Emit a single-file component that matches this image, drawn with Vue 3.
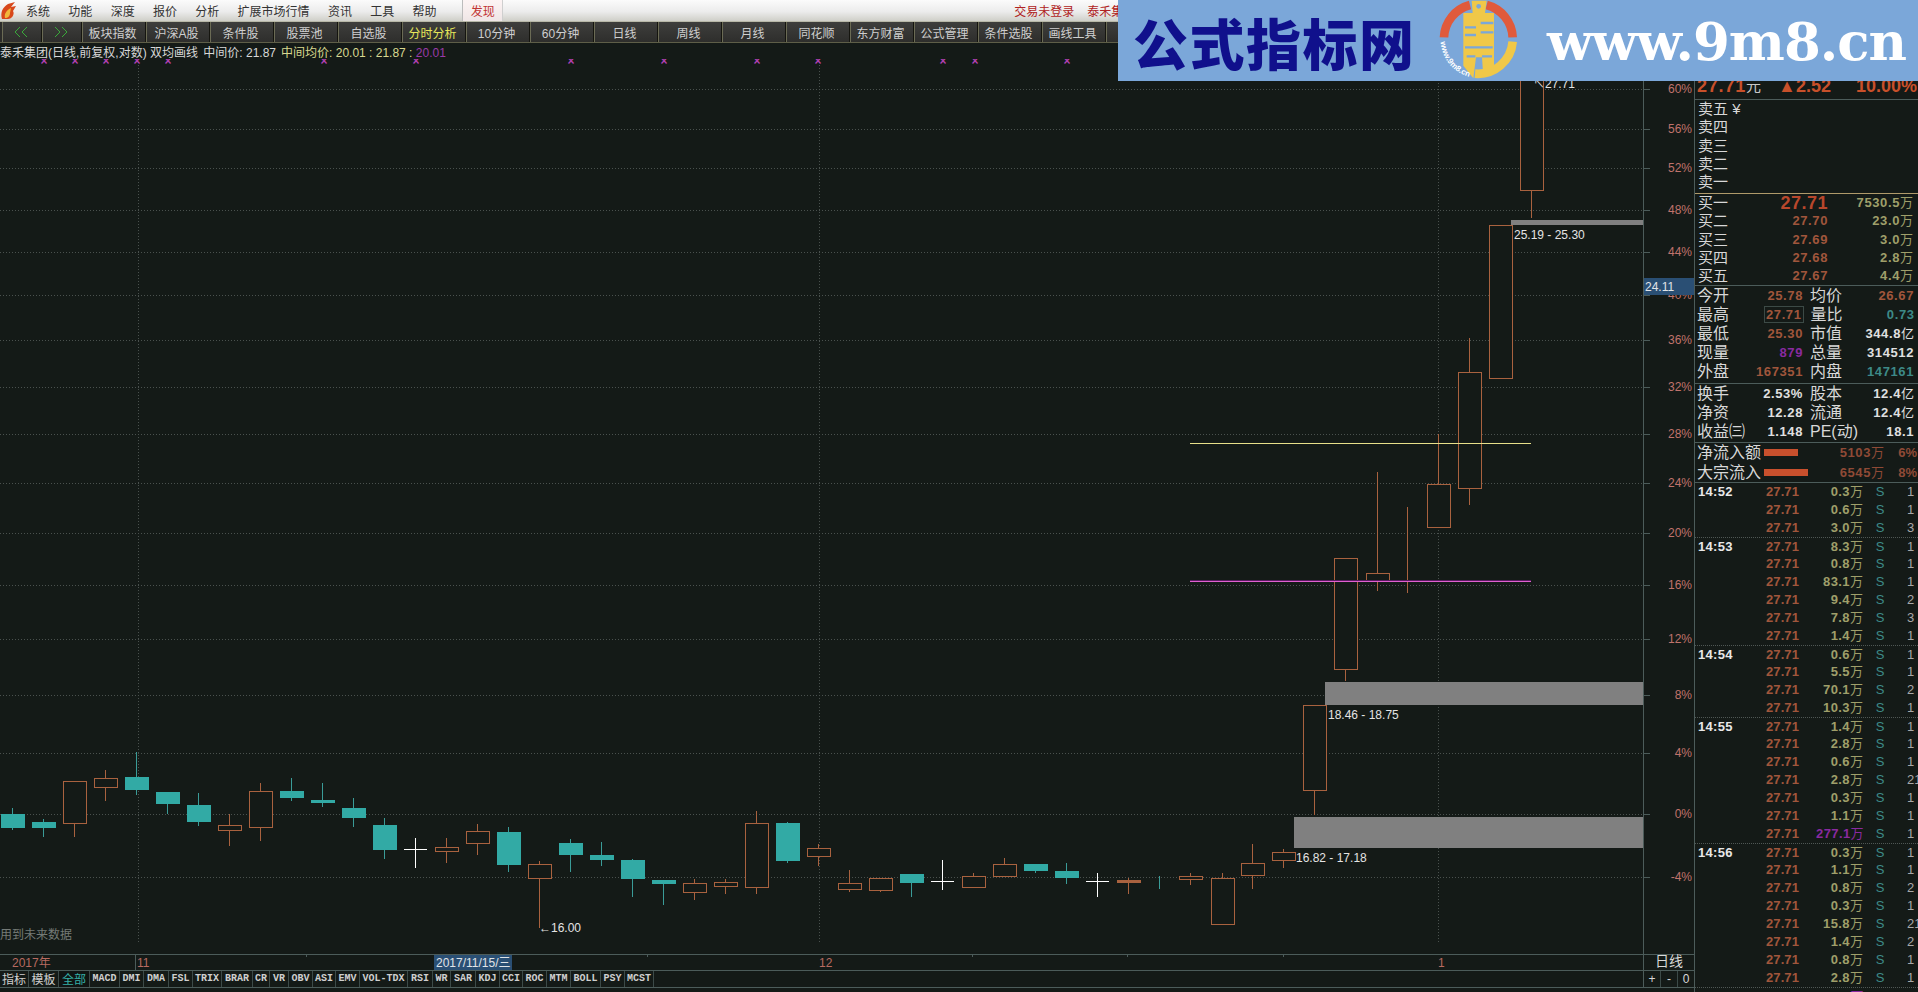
<template>
  <div class="terminal">
    <div class="menubar">
      <svg class="app-icon" width="18" height="20" viewBox="0 0 18 20">
        <path d="M2 18 C0 11 3 6 8 3 L15 1 L11 6 L16 5 L13 10 C15 13 12 18 8 18 Z" fill="#d8481c" />
        <path d="M5 17 C4 12 7 9 11 7 L10 12 C10 15 8 17 5 17 Z" fill="#f2b83c" />
      </svg>
      <span v-for="m in menus" :key="m" class="menu-item">{{ m }}</span>
      <span class="discover">发现</span>
      <div class="account">
        <span>交易未登录</span>
        <span>泰禾集团</span>
      </div>
    </div>

    <div class="toolbar">
      <div class="tool-btn nav">
        <svg width="14" height="12" viewBox="0 0 14 12"><path d="M6 1 L1 6 L6 11 M13 1 L8 6 L13 11" /></svg>
      </div>
      <div class="tool-btn nav">
        <svg width="14" height="12" viewBox="0 0 14 12"><path d="M1 1 L6 6 L1 11 M8 1 L13 6 L8 11" /></svg>
      </div>
      <div
        v-for="t in tools"
        :key="t"
        class="tool-btn"
        :class="{ active: t === '分时分析' }"
      >{{ t }}</div>
    </div>

    <div class="main">
      <div class="chart-col">
        <div class="info">
          <span>泰禾集团(日线,前复权,对数) 双均画线 </span>
          <span class="info-price">中间价: 21.87</span>
          <span class="info-yellow">中间均价: 20.01 : 21.87 : </span>
          <span class="info-purple">20.01</span>
        </div>

        <svg class="chart" width="1694" height="911" viewBox="0 59 1694 911" shape-rendering="crispEdges">
          <!-- grid -->
          <g v-for="g in grid" :key="g.label">
            <line x1="0" x2="1643" :y1="g.y + 0.5" :y2="g.y + 0.5" class="dots" />
            <line x1="1644" x2="1650" :y1="g.y + 0.5" :y2="g.y + 0.5" class="axis-line" />
            <text x="1692" :y="g.y + 4" text-anchor="end" class="axis-label">{{ g.label }}</text>
          </g>
          <line v-for="x in vLines" :key="x" :x1="x + 0.5" :x2="x + 0.5" y1="62" y2="943" class="dots" />
          <line x1="1643.5" x2="1643.5" y1="59" y2="970" class="axis-line" />

          <!-- zones -->
          <rect x="1294" y="817" width="349" height="31" class="zone" />
          <rect x="1325" y="682" width="318" height="23" class="zone" />
          <rect x="1511" y="220" width="132" height="5" class="zone" />

          <!-- candles -->
          <g v-for="c in candles" :key="c.x">
            <line :x1="c.x + 0.5" :x2="c.x + 0.5" :y1="c.hi" :y2="c.lo" :stroke="c.wick" />
            <line
              v-if="c.kind === 'x'"
              :x1="c.x - 11"
              :x2="c.x + 12"
              :y1="c.top + 0.5"
              :y2="c.top + 0.5"
              stroke="#fff"
            />
            <rect
              v-else
              :x="c.x - 11 + 0.5"
              :y="c.top + 0.5"
              width="23"
              :height="c.bot - c.top"
              :fill="c.fill"
              :stroke="c.stroke"
            />
          </g>

          <!-- drawn lines -->
          <line x1="1190" x2="1531" y1="443.5" y2="443.5" stroke="#e8e08a" />
          <line x1="1190" x2="1531" y1="580.5" y2="580.5" stroke="#5a1a60" />
          <line x1="1190" x2="1531" y1="581.5" y2="581.5" stroke="#e060d0" />

          <!-- x marks -->
          <text v-for="x in marks" :key="x" :x="x" y="65" text-anchor="middle" class="mark">×</text>

          <!-- price notes -->
          <g class="note">
            <text x="1296" y="862">16.82 - 17.18</text>
            <text x="1328" y="719">18.46 - 18.75</text>
            <text x="1514" y="239">25.19 - 25.30</text>
            <text x="539" y="932">←16.00</text>
            <text x="1533" y="88">↖27.71</text>
          </g>
          <text x="0" y="939" class="future">用到未来数据</text>

          <!-- date axis -->
          <line x1="0" x2="1694" y1="954.5" y2="954.5" class="axis-line" />
          <line v-for="x in dateTicks" :key="x" :x1="x + 0.5" :x2="x + 0.5" y1="955" y2="957" class="axis-line" />
          <line x1="135.5" x2="135.5" y1="955" y2="970" class="axis-line" />
          <text x="12" y="967" class="date-label">2017年</text>
          <text x="137" y="967" class="date-label">11</text>
          <text x="819" y="967" class="date-label">12</text>
          <text x="1438" y="967" class="date-label">1</text>
          <rect x="434" y="955" width="78" height="15" fill="#2a4f74" />
          <text x="436" y="967" class="date-current">2017/11/15/三</text>
          <text x="1669" y="966" text-anchor="middle" class="period">日线</text>

          <!-- cursor price -->
          <rect x="1644" y="278" width="50" height="17" fill="#2a4f74" />
          <text x="1645" y="291" class="date-current">24.11</text>
        </svg>

        <div class="tabs">
          <span
            v-for="t in tabs"
            :key="t.name"
            class="tab"
            :class="{ cjk: t.cjk, current: t.name === '全部' }"
            :style="{ width: t.w + 'px' }"
          >{{ t.name }}</span>
          <div class="zoom-btns">
            <span>+</span>
            <span>-</span>
            <span>0</span>
          </div>
        </div>
      </div>

      <div class="panel">
        <div class="quote">
          <span class="q-price">27.71</span><span class="q-unit">元</span>
          <span class="q-change">▲2.52</span>
          <span class="q-pct">10.00%</span>
        </div>

        <div class="sell">
          <div v-for="(s, i) in sells" :key="s" class="book-row">{{ s }}<span v-if="i === 0">&nbsp;¥</span></div>
        </div>

        <div class="buy">
          <div v-for="(b, i) in buys" :key="b.name" class="book-row">
            <span class="b-name">{{ b.name }}</span>
            <span class="b-price" :class="{ big: i === 0 }">{{ b.price }}</span>
            <span class="b-vol">{{ b.vol }}<i>万</i></span>
          </div>
        </div>

        <div class="stats first">
          <div v-for="r in statsA" :key="r[0]" class="stat-row">
            <span class="s-label">{{ r[0] }}</span>
            <span class="s-value" :class="[r[2], { boxed: r[1] === '27.71' }]">{{ r[1] }}</span>
            <span class="s-label second">{{ r[3] }}</span>
            <span class="s-value wide" :class="r[5]">{{ num(r[4]) }}<i>{{ unit(r[4]) }}</i></span>
          </div>
        </div>

        <div class="stats second-block">
          <div v-for="r in statsB" :key="r[0]" class="stat-row">
            <span class="s-label">{{ r[0] }}</span>
            <span class="s-value white">{{ r[1] }}</span>
            <span class="s-label second">{{ r[2] }}</span>
            <span class="s-value wide white">{{ num(r[3]) }}<i>{{ unit(r[3]) }}</i></span>
          </div>
        </div>

        <div class="flows">
          <div v-for="f in flows" :key="f.name" class="flow-row">
            <span class="f-name">{{ f.name }}</span>
            <span class="f-bar-wrap"><span class="f-bar" :style="{ width: f.bar + 'px' }"></span></span>
            <span class="f-val">{{ f.val }}<i>万</i></span>
            <span class="f-pct">{{ f.pct }}</span>
          </div>
        </div>

        <div class="trades">
          <div v-for="(t, i) in trades" :key="i" class="trade" :class="{ head: t.time }">
            <span class="t-time">{{ t.time }}</span>
            <span class="t-price">27.71</span>
            <span class="t-vol" :class="{ huge: t.vol === '277.1' || t.vol === '143.3' }">{{ t.vol }}<i>万</i></span>
            <span class="t-side">S</span>
            <span class="t-count">{{ t.n }}</span>
          </div>
        </div>
      </div>
    </div>

    <div class="banner">
      <span class="banner-title">公式指标网</span>
      <svg class="banner-logo" width="130" height="84" viewBox="0 0 390 252">
        <path d="M72 115 A105 105 0 0 1 150 18" class="arc red" />
        <path d="M200 18 A105 105 0 0 1 278 115" class="arc red" />
        <path d="M278 128 A105 105 0 0 1 165 224" class="arc gold" />
        <path
          d="M155 5 H200 L195 42 H222 V172 L222 215 L190 235 L186 175 H168 L160 238 L130 200 V42 H158 Z"
          fill="#f0c848"
        />
        <circle cx="176" cy="22" r="7" fill="#7ba7d9" />
        <path d="M135 85 H168 M135 108 H168 M182 72 H220 M182 100 H220 M135 145 H218 M140 172 H166 M186 172 H216" class="slot" />
        <defs>
          <path id="ringText" d="M62 128 A116 116 0 0 0 160 236" />
        </defs>
        <text class="ring-text"><textPath href="#ringText">www.9m8.cn</textPath></text>
      </svg>
      <span class="banner-site">www.9m8.cn</span>
    </div>
  </div>
</template>

<script setup>
const menus = ['系统', '功能', '深度', '报价', '分析', '扩展市场行情', '资讯', '工具', '帮助']

const tools = [
  '板块指数', '沪深A股', '条件股', '股票池', '自选股', '分时分析', '10分钟', '60分钟', '日线',
  '周线', '月线', '同花顺', '东方财富', '公式管理', '条件选股', '画线工具', '论坛'
]

const grid = [
  ['60%', 89], ['56%', 129], ['52%', 168], ['48%', 210], ['44%', 252], ['40%', 295],
  ['36%', 340], ['32%', 387], ['28%', 434], ['24%', 483], ['20%', 533], ['16%', 585],
  ['12%', 639], ['8%', 695], ['4%', 753], ['0%', 814], ['-4%', 877]
].map(([label, y]) => ({ label, y }))

const vLines = [138, 819, 1438]
const marks = [44, 75, 106, 137, 168, 324, 416, 571, 664, 757, 818, 943, 975, 1067]
const dateTicks = [306, 647, 972, 1127, 1283]

const BG = '#141a17'
const UP = '#a9623f'
const DOWN = '#32aaa5'

// x, high, low, body top, body bottom, kind (r hollow red, g solid green, f solid red, x doji)
const candles = [
  [12, 808, 830, 814, 827, 'g'], [43, 819, 837, 822, 827, 'g'], [74, 781, 837, 781, 823, 'r'],
  [105, 770, 801, 778, 787, 'r'], [136, 752, 795, 777, 789, 'g'], [167, 792, 814, 792, 803, 'g'],
  [198, 793, 826, 805, 821, 'g'], [229, 814, 846, 825, 830, 'r'], [260, 783, 841, 791, 827, 'r'],
  [291, 778, 801, 791, 797, 'g'], [322, 783, 807, 800, 802, 'g'], [353, 798, 827, 808, 817, 'g'],
  [384, 818, 859, 825, 849, 'g'], [415, 838, 868, 849, 849, 'x'], [446, 838, 863, 847, 851, 'r'],
  [477, 824, 855, 831, 843, 'r'], [508, 827, 872, 832, 864, 'g'], [539, 861, 928, 864, 878, 'r'],
  [570, 839, 872, 843, 854, 'g'], [601, 842, 866, 855, 859, 'g'], [632, 859, 897, 860, 878, 'g'],
  [663, 880, 905, 880, 883, 'g'], [694, 879, 900, 883, 892, 'r'], [725, 879, 894, 882, 886, 'r'],
  [756, 811, 894, 823, 887, 'r'], [787, 822, 863, 823, 860, 'g'], [818, 844, 866, 848, 856, 'r'],
  [849, 870, 892, 883, 889, 'r'], [880, 878, 892, 878, 890, 'r'], [911, 874, 897, 874, 882, 'g'],
  [942, 860, 890, 881, 881, 'x'], [973, 873, 888, 876, 887, 'r'], [1004, 858, 876, 864, 876, 'r'],
  [1035, 864, 873, 864, 870, 'g'], [1066, 863, 884, 871, 877, 'g'], [1097, 873, 897, 881, 881, 'x'],
  [1128, 878, 894, 880, 882, 'f'], [1159, 876, 889, 879, 879, 'g'], [1190, 873, 885, 876, 879, 'r'],
  [1222, 873, 924, 878, 924, 'r'], [1252, 844, 889, 863, 875, 'r'], [1283, 849, 868, 852, 860, 'r'],
  [1314, 705, 815, 705, 790, 'r'], [1345, 558, 681, 558, 669, 'r'], [1377, 472, 591, 573, 581, 'r'],
  [1407, 507, 593, 581, 581, 'f'], [1438, 434, 527, 484, 527, 'r'], [1469, 338, 505, 372, 488, 'r'],
  [1500, 225, 378, 225, 378, 'r'], [1531, 60, 218, 60, 190, 'r']
].map(([x, hi, lo, top, bot, kind]) => ({
  x, hi, lo, top, bot, kind,
  wick: kind === 'x' ? '#fff' : kind === 'g' ? '#3a9c98' : UP,
  fill: kind === 'g' ? DOWN : kind === 'f' ? UP : BG,
  stroke: kind === 'g' ? DOWN : UP
}))

const tabs = [
  { name: '指标', w: 29, cjk: true }, { name: '模板', w: 30, cjk: true }, { name: '全部', w: 31, cjk: true },
  { name: 'MACD', w: 30 }, { name: 'DMI', w: 24 }, { name: 'DMA', w: 25 }, { name: 'FSL', w: 24 },
  { name: 'TRIX', w: 29 }, { name: 'BRAR', w: 31 }, { name: 'CR', w: 17 }, { name: 'VR', w: 19 },
  { name: 'OBV', w: 24 }, { name: 'ASI', w: 23 }, { name: 'EMV', w: 24 }, { name: 'VOL-TDX', w: 48 },
  { name: 'RSI', w: 25 }, { name: 'WR', w: 18 }, { name: 'SAR', w: 25 }, { name: 'KDJ', w: 24 },
  { name: 'CCI', w: 23 }, { name: 'ROC', w: 24 }, { name: 'MTM', w: 24 }, { name: 'BOLL', w: 30 },
  { name: 'PSY', w: 24 }, { name: 'MCST', w: 29 }
]

const sells = ['卖五', '卖四', '卖三', '卖二', '卖一']

const buys = [
  { name: '买一', price: '27.71', vol: '7530.5' },
  { name: '买二', price: '27.70', vol: '23.0' },
  { name: '买三', price: '27.69', vol: '3.0' },
  { name: '买四', price: '27.68', vol: '2.8' },
  { name: '买五', price: '27.67', vol: '4.4' }
]

const statsA = [
  ['今开', '25.78', 'red', '均价', '26.67', 'red'],
  ['最高', '27.71', 'red', '量比', '0.73', 'teal'],
  ['最低', '25.30', 'red', '市值', '344.8亿', 'white'],
  ['现量', '879', 'purple', '总量', '314512', 'white'],
  ['外盘', '167351', 'red', '内盘', '147161', 'teal']
]

const statsB = [
  ['换手', '2.53%', '股本', '12.4亿'],
  ['净资', '12.28', '流通', '12.4亿'],
  ['收益㈢', '1.148', 'PE(动)', '18.1']
]

// the 亿 suffix is drawn in the regular weight
const num = (v) => v.replace('亿', '')
const unit = (v) => (v.endsWith('亿') ? '亿' : '')

const flows = [
  { name: '净流入额', bar: 34, val: '5103', pct: '6%' },
  { name: '大宗流入', bar: 44, val: '6545', pct: '8%' }
]

const rows = [
  ['14:52', '0.3', 1], ['', '0.6', 1], ['', '3.0', 3],
  ['14:53', '8.3', 1], ['', '0.8', 1], ['', '83.1', 1], ['', '9.4', 2], ['', '7.8', 3], ['', '1.4', 1],
  ['14:54', '0.6', 1], ['', '5.5', 1], ['', '70.1', 2], ['', '10.3', 1],
  ['14:55', '1.4', 1], ['', '2.8', 1], ['', '0.6', 1], ['', '2.8', 21], ['', '0.3', 1], ['', '1.1', 1], ['', '277.1', 1],
  ['14:56', '0.3', 1], ['', '1.1', 1], ['', '0.8', 2], ['', '0.3', 1], ['', '15.8', 21], ['', '1.4', 2], ['', '0.8', 1], ['', '2.8', 1],
  ['14:57', '143.3', 1]
]
const trades = rows.map(([time, vol, n]) => ({ time, vol, n }))
</script>

<style>
html, body {
  margin: 0;
  background: #141a17;
  overflow: hidden;
}
</style>

<style scoped>
.terminal {
  position: relative;
  width: 1918px;
  height: 992px;
  overflow: hidden;
  display: flex;
  flex-direction: column;
  background: #141a17;
  color: #d8d8d8;
  font-family: "Liberation Sans", "Noto Sans CJK SC", sans-serif;
  font-size: 12px;
}

.menubar {
  height: 22px;
  flex: none;
  display: flex;
  align-items: center;
  gap: 18.3px;
  padding-left: 26px;
  box-sizing: border-box;
  position: relative;
  background: linear-gradient(#fbfbfb, #ececec 55%, #cfcfc8);
  border-bottom: 1px solid #b8b8a8;
  color: #333;
}

.app-icon {
  position: absolute;
  left: 0;
  top: 1px;
}

.discover {
  height: 100%;
  padding: 0 7px 0 8px;
  margin-left: 7px;
  display: flex;
  align-items: center;
  color: #c23434;
  background: linear-gradient(#fdf4f4, #efe6e6);
  border-left: 1px solid #bcbcbc;
  border-right: 1px solid #cfcfcf;
}

.account {
  display: flex;
  gap: 13px;
  margin-left: 493px;
  color: #b02222;
}

.toolbar {
  height: 21px;
  flex: none;
  display: flex;
  padding-left: 2px;
  background: #2c2c2a;
  border-bottom: 1px solid #5e5e48;
  box-sizing: border-box;
  overflow: hidden;
}

.tool-btn {
  width: 64px;
  flex: none;
  box-sizing: border-box;
  padding-right: 3px;
  display: flex;
  align-items: center;
  justify-content: center;
  color: #cfcfcf;
  background: linear-gradient(#3e3e3c, #2e2e2c);
  border-right: 1px solid #15150f;
  border-left: 1px solid #6b6b55;
}

.tool-btn.nav {
  width: 40px;
}

.tool-btn.nav svg {
  fill: none;
  stroke: #3aaa3a;
  stroke-width: 1;
}

.tool-btn.active {
  color: #e6e65a;
}

.main {
  flex: 1;
  min-height: 0;
  display: flex;
}

.chart-col {
  width: 1694px;
  flex: none;
  display: flex;
  flex-direction: column;
}

.info {
  height: 16px;
  line-height: 20px;
  flex: none;
  white-space: pre;
  color: #d8d8d8;
}

.info-price {
  margin-left: 2px;
  margin-right: 5px;
}

.info-yellow {
  color: #d8d890;
}

.info-purple {
  color: #9a3aa8;
}

.chart {
  display: block;
  flex: none;
  font-family: "Liberation Sans", "Noto Sans CJK SC", sans-serif;
  font-size: 12px;
}

.chart text {
  shape-rendering: auto;
}

.dots {
  stroke: #4a514e;
  stroke-dasharray: 1 2;
}

.axis-line {
  stroke: #4c5c5a;
}

.axis-label {
  fill: #c0736c;
}

.zone {
  fill: #808080;
}

.mark {
  fill: #b040b0;
  font-size: 12px;
  font-weight: 700;
}

.note text {
  fill: #e4e4e4;
}

.future {
  fill: #747a76;
}

.date-label {
  fill: #b86a60;
}

.date-current {
  fill: #e0e4e8;
}

.period {
  fill: #d8d8d8;
  font-size: 14px;
}

.tabs {
  height: 16px;
  flex: none;
  display: flex;
  background: #141a17;
  border-top: 1px solid #4c5c5a;
  border-bottom: 1px solid #4c5c5a;
  box-sizing: content-box;
}

.tab {
  flex: none;
  box-sizing: border-box;
  text-align: center;
  line-height: 16px;
  font-family: "Liberation Mono", monospace;
  font-size: 10px;
  font-weight: 700;
  color: #cfcfcf;
  border-right: 1px solid #3c4a48;
}

.tab.cjk {
  font-family: "Noto Sans CJK SC", sans-serif;
  font-size: 12px;
  font-weight: 400;
}

.tab.current {
  color: #35b0a8;
  background: #101412;
}

.zoom-btns {
  margin-left: auto;
  width: 50px;
  display: flex;
  font-size: 12px;
  line-height: 16px;
  text-align: center;
  border-left: 1px solid #4c5c5a;
}

.zoom-btns span {
  flex: 1;
  border-right: 1px solid #3c4a48;
}

.zoom-btns span:last-child {
  border-right: 0;
}

.panel {
  width: 224px;
  flex: none;
  box-sizing: border-box;
  border-left: 1px solid #4c5c5a;
  overflow: hidden;
  font-size: 16px;
  font-weight: 400;
}

.panel i {
  font-style: normal;
  font-weight: 400;
  font-size: 13px;
  letter-spacing: 0;
}

.quote {
  height: 57px;
  box-sizing: border-box;
  display: flex;
  align-items: flex-end;
  padding: 0 1px 3px 2px;
  border-bottom: 1px solid #4c5c5a;
  line-height: 20px;
  font-size: 18px;
  font-weight: 700;
  color: #c8502a;
}

.q-price {
  letter-spacing: 0.8px;
}

.q-unit {
  font-size: 15px;
  font-weight: 400;
  color: #c8c8c8;
}

.q-change {
  margin-left: 17px;
}

.q-pct {
  margin-left: auto;
}

.sell {
  height: 94px;
  padding-left: 3px;
  box-sizing: border-box;
  font-size: 15px;
  border-bottom: 1px solid #b09a6a;
}

.book-row {
  height: 18.3px;
  line-height: 18.3px;
  display: flex;
  align-items: center;
}

.buy {
  height: 92px;
  padding-left: 3px;
  box-sizing: border-box;
  font-size: 15px;
  border-bottom: 1px solid #4c5c5a;
}

.b-name {
  width: 85px;
  flex: none;
}

.b-price {
  width: 45px;
  flex: none;
  text-align: right;
  font-size: 13px;
  font-weight: 700;
  letter-spacing: 0.6px;
  color: #a0563c;
}

.b-price.big {
  width: 50px;
  margin-left: -5px;
  font-size: 18px;
  letter-spacing: 0.5px;
  color: #b8472c;
}

.b-vol {
  margin-left: auto;
  padding-right: 5px;
  font-size: 13px;
  font-weight: 700;
  letter-spacing: 0.6px;
  color: #9f9f6a;
}

.stats {
  font-size: 16px;
  padding-left: 2px;
  box-sizing: border-box;
  border-bottom: 1px solid #4c5c5a;
}

.stats.first {
  height: 98px;
}

.stats.second-block {
  height: 59px;
}

.stat-row {
  height: 19px;
  line-height: 19px;
  display: flex;
  align-items: center;
}

.s-label {
  width: 46px;
  flex: none;
  white-space: nowrap;
}

.s-label.second {
  width: 41px;
  margin-left: 7px;
}

.s-value {
  width: 60px;
  flex: none;
  text-align: right;
  font-size: 13px;
  font-weight: 700;
  letter-spacing: 0.6px;
  white-space: nowrap;
}

.s-value.wide {
  width: 63px;
}

.s-value.boxed {
  width: auto;
  margin-left: 21px;
  padding: 0 1px;
  line-height: 15px;
  border: 1px solid #3c4a46;
  box-sizing: border-box;
}

.red {
  color: #a0563c;
}

.teal {
  color: #3d8a88;
}

.white {
  color: #e0e0e0;
}

.purple {
  color: #8a2aa0;
}

.flows {
  height: 40px;
  padding-left: 2px;
  box-sizing: border-box;
  border-bottom: 1px solid #4c5c5a;
}

.flow-row {
  height: 19.5px;
  line-height: 19.5px;
  display: flex;
  align-items: center;
}

.f-name {
  width: 67px;
  flex: none;
  white-space: nowrap;
}

.f-bar-wrap {
  width: 50px;
  flex: none;
  display: flex;
}

.f-bar {
  height: 7px;
  background: #c8502d;
}

.f-val {
  width: 70px;
  flex: none;
  text-align: right;
  font-size: 13px;
  font-weight: 700;
  letter-spacing: 0.6px;
  color: #8f4a36;
}

.f-pct {
  width: 33px;
  flex: none;
  text-align: right;
  font-size: 13px;
  font-weight: 700;
  color: #8f4a36;
}

.trade {
  height: 18px;
  box-sizing: border-box;
  line-height: 18px;
  display: flex;
  align-items: center;
  font-size: 13px;
  font-weight: 700;
  white-space: nowrap;
}

.trade.head {
  border-top: 1px dotted #4f5754;
}

.trade:first-child {
  border-top: 0;
}

.t-time {
  width: 71px;
  flex: none;
  padding-left: 3px;
  box-sizing: border-box;
  letter-spacing: 0.3px;
  color: #e8e8e8;
}

.t-price {
  width: 50px;
  flex: none;
  letter-spacing: 0.1px;
  color: #a0563c;
}

.t-vol {
  width: 47px;
  flex: none;
  text-align: right;
  letter-spacing: 0.4px;
  color: #9f9f6a;
}

.t-vol.huge {
  color: #8a2aa0;
}

.t-side {
  width: 34px;
  flex: none;
  text-align: center;
  font-weight: 400;
  color: #3d8a88;
}

.t-count {
  padding-left: 10px;
  flex: none;
  font-weight: 400;
  color: #a8a8a8;
}

.banner {
  position: absolute;
  left: 1118px;
  top: 0;
  right: 0;
  height: 81px;
  background: #7ba7d9;
  display: flex;
  align-items: center;
}

.banner-title {
  margin-left: 15px;
  width: 287px;
  flex: none;
  font-family: "Noto Sans CJK SC", sans-serif;
  font-size: 55px;
  font-weight: 900;
  line-height: 76px;
  letter-spacing: 1.5px;
  color: #10108c;
  white-space: nowrap;
}

.banner-logo {
  flex: none;
}

.arc {
  fill: none;
  stroke-width: 26;
}

.arc.red {
  stroke: #e05a3c;
}

.arc.gold {
  stroke: #f0c848;
}

.slot {
  fill: none;
  stroke: #7ba7d9;
  stroke-width: 7;
}

.ring-text {
  fill: #fff;
  font-family: "Liberation Sans", sans-serif;
  font-size: 24px;
  font-weight: 700;
}

.banner-site {
  margin-left: -3px;
  font-family: "DejaVu Serif", serif;
  font-size: 53px;
  font-weight: 700;
  line-height: 60px;
  letter-spacing: -1px;
  color: #fff;
  white-space: nowrap;
}
</style>
